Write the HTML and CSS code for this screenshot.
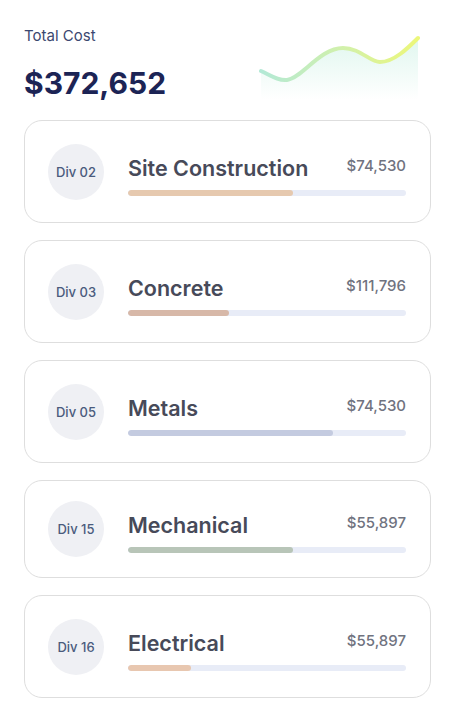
FILE: index.html
```html
<!DOCTYPE html>
<html lang="en">
<head>
  <meta charset="UTF-8">
  <title>Total Cost</title>
  <link rel="stylesheet" href="styles.css">
</head>
<body>

<div class="summary">
  <div class="summary-text">
    <div class="summary-label">Total Cost</div>
    <div class="summary-amount">$372,652</div>
  </div>
  <svg class="spark" width="162" height="66" viewBox="0 0 162 66">
    <defs>
      <linearGradient id="sparkLine" x1="0" y1="0" x2="1" y2="0">
        <stop offset="0" stop-color="#b3e9d6"/>
        <stop offset="0.55" stop-color="#d3f1a8"/>
        <stop offset="1" stop-color="#ecf77a"/>
      </linearGradient>
      <linearGradient id="sparkFill" x1="0" y1="0" x2="0" y2="1">
        <stop offset="0" stop-color="#c8f0e2" stop-opacity="0.55"/>
        <stop offset="1" stop-color="#c8f0e2" stop-opacity="0"/>
      </linearGradient>
    </defs>
    <path d="M3 37 C12 41, 20 47, 29 46 C44 44, 62 14, 85 14 C102 14, 112 28, 122 28 C136 28, 150 14, 160 4 L160 66 L3 66 Z" fill="url(#sparkFill)"/>
    <path d="M3 37 C12 41, 20 47, 29 46 C44 44, 62 14, 85 14 C102 14, 112 28, 122 28 C136 28, 150 14, 160 4" fill="none" stroke="url(#sparkLine)" stroke-width="4" stroke-linecap="round"/>
  </svg>
</div>

<div class="divisions">

  <div class="card">
    <div class="badge">Div 02</div>
    <div class="card-body">
      <div class="card-head">
        <div class="card-title">Site Construction</div>
        <div class="card-price">$74,530</div>
      </div>
      <div class="bar"><div class="bar-fill fill-sand" style="width: 59.4%"></div></div>
    </div>
  </div>

  <div class="card">
    <div class="badge">Div 03</div>
    <div class="card-body">
      <div class="card-head">
        <div class="card-title">Concrete</div>
        <div class="card-price">$111,796</div>
      </div>
      <div class="bar"><div class="bar-fill fill-clay" style="width: 36.3%"></div></div>
    </div>
  </div>

  <div class="card">
    <div class="badge">Div 05</div>
    <div class="card-body">
      <div class="card-head">
        <div class="card-title">Metals</div>
        <div class="card-price">$74,530</div>
      </div>
      <div class="bar"><div class="bar-fill fill-steel" style="width: 73.9%"></div></div>
    </div>
  </div>

  <div class="card card-tight">
    <div class="badge">Div 15</div>
    <div class="card-body">
      <div class="card-head">
        <div class="card-title">Mechanical</div>
        <div class="card-price">$55,897</div>
      </div>
      <div class="bar"><div class="bar-fill fill-sage" style="width: 59.4%"></div></div>
    </div>
  </div>

  <div class="card">
    <div class="badge">Div 16</div>
    <div class="card-body">
      <div class="card-head">
        <div class="card-title">Electrical</div>
        <div class="card-price">$55,897</div>
      </div>
      <div class="bar"><div class="bar-fill fill-peach" style="width: 22.5%"></div></div>
    </div>
  </div>

</div>

</body>
</html>
```

FILE: styles.css
```css
body {
  font-family: Inter, "Noto Sans", sans-serif;
  background: #fff;
  margin: 0;
  padding: 26px 24px 0;
}

.summary {
  display: flex;
  justify-content: space-between;
  align-items: flex-start;
}

.summary-label {
  font-size: 15px;
  line-height: 20px;
  color: #3b4870;
}

.summary-amount {
  margin-top: 19px;
  font-size: 30px;
  line-height: 36px;
  font-weight: 700;
  color: #1c2455;
}

.spark {
  display: block;
  margin-top: 8px;
  margin-right: 11px;
}

.divisions {
  margin-top: 19px;
  display: flex;
  flex-direction: column;
  gap: 17px;
}

.card {
  display: flex;
  align-items: center;
  gap: 24px;
  padding: 23px 24px 22px 23px;
  border: 1px solid #dedede;
  border-radius: 18px;
}

.card-tight {
  padding-top: 20px;
  padding-bottom: 20px;
}

.badge {
  flex: none;
  width: 56px;
  height: 56px;
  border-radius: 50%;
  background: #eff0f4;
  display: flex;
  align-items: center;
  justify-content: center;
  font-size: 13px;
  font-weight: 500;
  color: #4a5b7d;
}

.card-body {
  flex: 1;
  margin-top: 6px;
}

.card-head {
  display: flex;
  justify-content: space-between;
  align-items: flex-start;
}

.card-title {
  font-size: 21.5px;
  line-height: 28px;
  font-weight: 600;
  color: #474a59;
}

.card-price {
  margin-top: 2px;
  font-size: 15px;
  line-height: 20px;
  font-weight: 500;
  color: #70737f;
}

.bar {
  margin-top: 8px;
  height: 6px;
  border-radius: 3px;
  background: #e8ecf7;
  overflow: hidden;
}

.bar-fill {
  height: 100%;
  border-radius: 3px;
}

.fill-sand { background: #e6c9af; }
.fill-clay { background: #d7b8a8; }
.fill-steel { background: #c4cbe0; }
.fill-sage { background: #b8c5b8; }
.fill-peach { background: #e8c7b0; }
```
